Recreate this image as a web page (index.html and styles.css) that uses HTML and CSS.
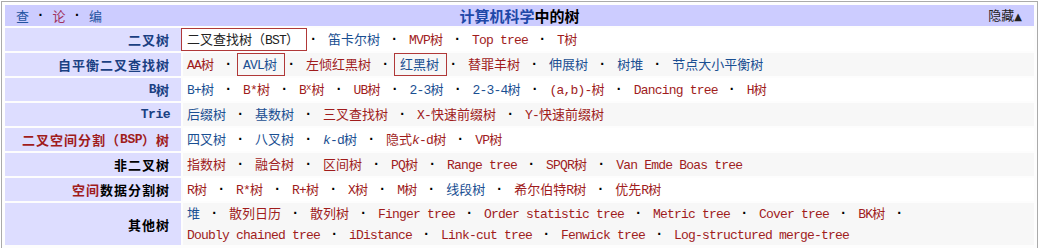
FILE: index.html
```html
<!DOCTYPE html>
<html lang="zh">
<head>
<meta charset="utf-8">
<title>计算机科学中的树</title>
<link rel="stylesheet" href="styles.css">
</head>
<body>
<div class="navbox">
  <div class="title">
    <div class="navbar"><a class="nb">查</a><span class="nsep">·</span><a class="nv">论</a><span class="nsep">·</span><a class="nb">编</a></div>
    <div class="heading"><a class="tb">计算机科学</a>中的树</div>
    <div class="toggle">隐藏<span class="tri">▲</span></div>
  </div>
  <div class="rows">
    <div class="group gb">二叉树</div>
    <div class="list"><div class="items"><span class="item k box">二叉查找树（<span class="m">BST</span>）</span><span class="sep">·</span><wbr><span class="item b">笛卡尔树</span><span class="sep">·</span><wbr><span class="item r"><span class="m">MVP</span>树</span><span class="sep">·</span><wbr><span class="item r m">Top tree</span><span class="sep">·</span><wbr><span class="item r"><span class="m">T</span>树</span></div></div>

    <div class="group gb">自平衡二叉查找树</div>
    <div class="list even"><div class="items"><span class="item r"><span class="m">AA</span>树</span><span class="sep">·</span><wbr><span class="item b box"><span class="m">AVL</span>树</span><span class="sep">·</span><wbr><span class="item r">左倾红黑树</span><span class="sep">·</span><wbr><span class="item b box">红黑树</span><span class="sep">·</span><wbr><span class="item r">替罪羊树</span><span class="sep">·</span><wbr><span class="item b">伸展树</span><span class="sep">·</span><wbr><span class="item b">树堆</span><span class="sep">·</span><wbr><span class="item b">节点大小平衡树</span></div></div>

    <div class="group gb"><span class="m">B</span>树</div>
    <div class="list"><div class="items"><span class="item b"><span class="m">B+</span>树</span><span class="sep">·</span><wbr><span class="item r"><span class="m">B*</span>树</span><span class="sep">·</span><wbr><span class="item r"><span class="m">B<sup>x</sup></span>树</span><span class="sep">·</span><wbr><span class="item r"><span class="m">UB</span>树</span><span class="sep">·</span><wbr><span class="item b"><span class="m">2-3</span>树</span><span class="sep">·</span><wbr><span class="item b"><span class="m">2-3-4</span>树</span><span class="sep">·</span><wbr><span class="item r"><span class="m">(a,b)-</span>树</span><span class="sep">·</span><wbr><span class="item r m">Dancing tree</span><span class="sep">·</span><wbr><span class="item r"><span class="m">H</span>树</span></div></div>

    <div class="group gb"><span class="m">Trie</span></div>
    <div class="list even"><div class="items"><span class="item b">后缀树</span><span class="sep">·</span><wbr><span class="item b">基数树</span><span class="sep">·</span><wbr><span class="item r">三叉查找树</span><span class="sep">·</span><wbr><span class="item r"><span class="m">X-</span>快速前缀树</span><span class="sep">·</span><wbr><span class="item r"><span class="m">Y-</span>快速前缀树</span></div></div>

    <div class="group gr">二叉空间分割（<span class="m">BSP</span>）树</div>
    <div class="list"><div class="items"><span class="item b">四叉树</span><span class="sep">·</span><wbr><span class="item b">八叉树</span><span class="sep">·</span><wbr><span class="item b"><span class="m"><i>k</i>-d</span>树</span><span class="sep">·</span><wbr><span class="item r">隐式<span class="m"><i>k</i>-d</span>树</span><span class="sep">·</span><wbr><span class="item r"><span class="m">VP</span>树</span></div></div>

    <div class="group gk">非二叉树</div>
    <div class="list even"><div class="items"><span class="item r">指数树</span><span class="sep">·</span><wbr><span class="item r">融合树</span><span class="sep">·</span><wbr><span class="item r">区间树</span><span class="sep">·</span><wbr><span class="item r"><span class="m">PQ</span>树</span><span class="sep">·</span><wbr><span class="item r m">Range tree</span><span class="sep">·</span><wbr><span class="item r"><span class="m">SPQR</span>树</span><span class="sep">·</span><wbr><span class="item r m">Van Emde Boas tree</span></div></div>

    <div class="group gk"><span class="gr">空间</span>数据分割树</div>
    <div class="list"><div class="items"><span class="item r"><span class="m">R</span>树</span><span class="sep">·</span><wbr><span class="item r"><span class="m">R*</span>树</span><span class="sep">·</span><wbr><span class="item r"><span class="m">R+</span>树</span><span class="sep">·</span><wbr><span class="item r"><span class="m">X</span>树</span><span class="sep">·</span><wbr><span class="item r"><span class="m">M</span>树</span><span class="sep">·</span><wbr><span class="item b">线段树</span><span class="sep">·</span><wbr><span class="item r">希尔伯特<span class="m">R</span>树</span><span class="sep">·</span><wbr><span class="item r">优先<span class="m">R</span>树</span></div></div>

    <div class="group gk">其他树</div>
    <div class="list even"><div class="items"><span class="item b">堆</span><span class="sep">·</span><wbr><span class="item r">散列日历</span><span class="sep">·</span><wbr><span class="item r">散列树</span><span class="sep">·</span><wbr><span class="item r m">Finger tree</span><span class="sep">·</span><wbr><span class="item r m">Order statistic tree</span><span class="sep">·</span><wbr><span class="item r m">Metric tree</span><span class="sep">·</span><wbr><span class="item r m">Cover tree</span><span class="sep">·</span><wbr><span class="item r"><span class="m">BK</span>树</span><span class="sep">·</span><wbr><span class="item r m">Doubly chained tree</span><span class="sep">·</span><wbr><span class="item r m">iDistance</span><span class="sep">·</span><wbr><span class="item r m">Link-cut tree</span><span class="sep">·</span><wbr><span class="item r m">Fenwick tree</span><span class="sep">·</span><wbr><span class="item r m">Log-structured merge-tree</span></div></div>
  </div>
</div>
</body>
</html>
```

FILE: styles.css
```css
* { box-sizing: border-box; }
html, body { margin: 0; padding: 0; background: #fff; }
body {
  font-family: "Noto Sans CJK SC", sans-serif;
  font-size: 13px;
  color: #000;
}
.navbox {
  margin: 1px 0 0 1px;
  width: 1037px;
  border: 1px solid #aaa;
  padding: 3px;
  background: #fdfdfd;
}
.title {
  display: grid;
  grid-template-columns: 1fr auto 1fr;
  align-items: center;
  height: 21px;
  background: #ccf;
  line-height: 19px;
}
.navbar {
  justify-self: start;
  padding-left: 11px;
  display: flex;
  align-items: center;
}
.nsep {
  display: inline-block;
  width: 23.5px;
  text-align: center;
  font-weight: bold;
  font-family: "Liberation Sans", sans-serif;
  font-size: 14px;
}
.nb { color: #2353a0; }
.nv { color: #a0305c; }
.heading { font-size: 15px; font-weight: bold; color: #000; }
.tb { color: #1e48a8; }
.toggle { justify-self: end; padding-right: 12px; color: #222; }
.tri { font-family: "DejaVu Sans", sans-serif; font-size: 10px; }
.rows {
  display: grid;
  grid-template-columns: 176px 1fr;
  gap: 2px;
  margin-top: 2px;
}
.group {
  display: flex;
  align-items: center;
  justify-content: flex-end;
  min-height: 23px;
  padding-right: 11px;
  background: #ddf;
  font-weight: bold;
  line-height: 19px;
  letter-spacing: 1px;
}
.gb { color: #1a3f82; }
.gr { color: #a01c1c; }
.gk { color: #000; }
.list {
  display: flex;
  align-items: center;
  min-height: 23px;
  padding: 0 4px;
  line-height: 19px;
  background: #fff;
}
.list.even { background: #f7f7f7; }
.items { line-height: 19px; }
.item { white-space: nowrap; }
.sep {
  display: inline-block;
  width: 29px;
  text-align: center;
  font-weight: bold;
  font-family: "Liberation Sans", sans-serif;
  font-size: 14px;
  color: #000;
  letter-spacing: 0;
}
.m {
  font-family: "Liberation Mono", monospace;
  font-size: 13px;
  letter-spacing: -0.8px;
}
.group .m { letter-spacing: -0.5px; }
sup { font-size: 9px; line-height: 0; vertical-align: 4px; letter-spacing: 0; }
.b { color: #1a4f92; }
.r { color: #a01c1c; }
.k { color: #222; }
.box { position: relative; }
.box::after {
  content: "";
  position: absolute;
  left: -6px;
  right: -8px;
  top: -1px;
  bottom: -3px;
  border: 1px solid #b03838;
}
```
